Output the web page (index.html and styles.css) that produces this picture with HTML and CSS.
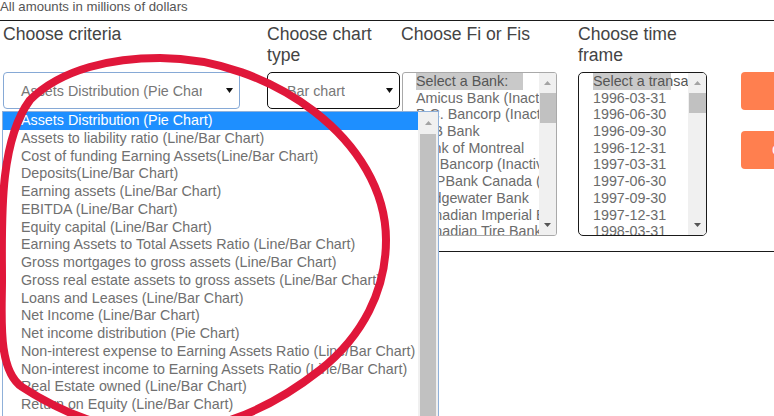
FILE: index.html
```html
<!DOCTYPE html>
<html lang="en">
<head>
<meta charset="utf-8">
<title>Chart criteria</title>
<link rel="stylesheet" href="styles.css">
</head>
<body>
<div class="page">
  <p class="note">All amounts in millions of dollars</p>
  <div class="rule"></div>
  <div class="filters">
    <div class="label">Choose criteria</div>
    <div class="label label-narrow">Choose chart type</div>
    <div class="label">Choose Fi or Fis</div>
    <div class="label label-narrow">Choose time frame</div>
    <div class="label"></div>

    <div class="cell cell-criteria">
      <div class="select select-criteria">
        <span class="select-text">Assets Distribution (Pie Chart)</span>
        <svg class="arrow" width="7" height="5" viewBox="0 0 7 5"><polygon points="0,0 7,0 3.5,5" fill="#111"/></svg>
      </div>
      <div class="dropdown">
        <ul class="dd-list">
          <li class="selected">Assets Distribution (Pie Chart)</li>
          <li>Assets to liability ratio (Line/Bar Chart)</li>
          <li>Cost of funding Earning Assets(Line/Bar Chart)</li>
          <li>Deposits(Line/Bar Chart)</li>
          <li>Earning assets (Line/Bar Chart)</li>
          <li>EBITDA (Line/Bar Chart)</li>
          <li>Equity capital (Line/Bar Chart)</li>
          <li>Earning Assets to Total Assets Ratio (Line/Bar Chart)</li>
          <li>Gross mortgages to gross assets (Line/Bar Chart)</li>
          <li>Gross real estate assets to gross assets (Line/Bar Chart)</li>
          <li>Loans and Leases (Line/Bar Chart)</li>
          <li>Net Income (Line/Bar Chart)</li>
          <li>Net income distribution (Pie Chart)</li>
          <li>Non-interest expense to Earning Assets Ratio (Line/Bar Chart)</li>
          <li>Non-interest income to Earning Assets Ratio (Line/Bar Chart)</li>
          <li>Real Estate owned (Line/Bar Chart)</li>
          <li>Return on Equity (Line/Bar Chart)</li>
        </ul>
        <div class="dd-scroll">
          <div class="sb-btn dd-up"><svg width="7" height="4" viewBox="0 0 7 4"><polygon points="0,4 7,4 3.5,0" fill="#a3a3a3"/></svg></div>
          <div class="dd-thumb"></div>
        </div>
      </div>
    </div>

    <div class="cell">
      <div class="select select-type">
        <span class="select-text">Bar chart</span>
        <svg class="arrow" width="7" height="5" viewBox="0 0 7 5"><polygon points="0,0 7,0 3.5,5" fill="#111"/></svg>
      </div>
    </div>

    <div class="cell">
      <div class="listbox listbox-bank">
        <div class="lb-options">
          <div class="placeholder">Select a Bank:</div>
          <div>Amicus Bank (Inactive)</div>
          <div>B.C. Bancorp (Inactive)</div>
          <div>B2B Bank</div>
          <div>Bank of Montreal</div>
          <div>BC Bancorp (Inactive)</div>
          <div>BNPBank Canada (Inactive)</div>
          <div>Bridgewater Bank</div>
          <div>Canadian Imperial Bank of Commerce</div>
          <div>Canadian Tire Bank</div>
        </div>
        <div class="lb-scroll">
          <div class="sb-btn"><svg width="7" height="4" viewBox="0 0 7 4"><polygon points="0,4 7,4 3.5,0" fill="#a3a3a3"/></svg></div>
          <div class="lb-thumb thumb-bank"></div>
          <div class="lb-track"></div>
          <div class="sb-btn"><svg width="7" height="4" viewBox="0 0 7 4"><polygon points="0,0 7,0 3.5,4" fill="#555"/></svg></div>
        </div>
      </div>
    </div>

    <div class="cell">
      <div class="listbox listbox-time">
        <div class="lb-options">
          <div class="placeholder">Select a transaction date</div>
          <div>1996-03-31</div>
          <div>1996-06-30</div>
          <div>1996-09-30</div>
          <div>1996-12-31</div>
          <div>1997-03-31</div>
          <div>1997-06-30</div>
          <div>1997-09-30</div>
          <div>1997-12-31</div>
          <div>1998-03-31</div>
        </div>
        <div class="lb-scroll">
          <div class="sb-btn"><svg width="7" height="4" viewBox="0 0 7 4"><polygon points="0,4 7,4 3.5,0" fill="#a3a3a3"/></svg></div>
          <div class="lb-thumb thumb-time"></div>
          <div class="lb-track"></div>
          <div class="sb-btn"><svg width="7" height="4" viewBox="0 0 7 4"><polygon points="0,0 7,0 3.5,4" fill="#555"/></svg></div>
        </div>
      </div>
    </div>

    <div class="cell buttons">
      <button class="btn btn-draw">Draw</button>
      <button class="btn btn-clear">C</button>
    </div>
  </div>
  <div class="rule rule-bottom"></div>
</div>
<svg class="annotation" width="774" height="416" viewBox="0 0 774 416">
  <path d="M160,58 C270,58 386,140 386,240 C386,290 363,336 320,370 C273,407 218,432 158,432 C110,432 62,413 22,387 C-3,370 2,315 2,280 C2,225 -2,143 30,100 C62,68 114,58 160,58 Z" fill="none" stroke="#e0173a" stroke-width="8"/>
</svg>
</body>
</html>
```
FILE: styles.css
```css
html, body {
  margin: 0;
  padding: 0;
  background: #fff;
}
body {
  width: 774px;
  height: 416px;
  overflow: hidden;
  position: relative;
  font-family: "Liberation Sans", Arial, sans-serif;
  color: #555;
}
.note {
  margin: -1px 0 0;
  font-size: 13.2px;
  line-height: 15px;
  color: #555;
}
.rule {
  height: 0;
  border-top: 1px solid #1a1a1a;
  margin-top: 6px;
}
.rule-bottom {
  margin-top: 15px;
}
.filters {
  display: grid;
  grid-template-columns: 264px 134px 177px 163px 33px;
  row-gap: 6px;
  padding: 3px 0 0 3px;
}
.label {
  font-size: 17.6px;
  line-height: 21px;
  color: #444;
}
.label-narrow {
  width: 130px;
}
.cell {
  position: relative;
}
.select {
  box-sizing: border-box;
  height: 37px;
  border: 1px solid #111;
  border-radius: 5px;
  display: flex;
  align-items: center;
  background: #fff;
}
.select-criteria {
  width: 237px;
  border-color: #86a9d6;
  border-radius: 4px;
}
.select-type {
  width: 133px;
}
.select-text {
  font-size: 14.3px;
  color: #777;
  white-space: nowrap;
  overflow: hidden;
}
.select-criteria .select-text {
  padding-left: 17px;
  width: 181px;
}
.select-type .select-text {
  padding-left: 19px;
}
.arrow {
  margin-left: auto;
  margin-right: 6px;
}
.dropdown {
  position: absolute;
  top: 39px;
  left: -1px;
  width: 437px;
  height: 330px;
  box-sizing: border-box;
  border: 1px solid #8fb0d9;
  background: #fff;
  display: flex;
  z-index: 5;
}
.dd-list {
  flex: 1;
  list-style: none;
  margin: 0;
  padding: 0;
  overflow: hidden;
}
.dd-list li {
  height: 17.75px;
  line-height: 17.75px;
  padding-left: 18px;
  font-size: 14.3px;
  color: #707070;
  white-space: nowrap;
}
.dd-list li.selected {
  background: #1e8fff;
  color: #fff;
}
.dd-scroll {
  width: 20px;
  background: #f0f0f0;
  display: flex;
  flex-direction: column;
}
.sb-btn {
  height: 20px;
  display: flex;
  align-items: center;
  justify-content: center;
  flex: none;
}
.dd-up {
  height: 21px;
}
.dd-thumb {
  flex: 1;
  margin: 1px 2px 0;
  background: #c1c1c1;
}
.listbox {
  box-sizing: border-box;
  height: 164px;
  border: 1px solid #a9a9a9;
  border-radius: 3px;
  display: flex;
  overflow: hidden;
  background: #fff;
}
.listbox-bank {
  width: 155px;
  margin-left: 1px;
}
.listbox-time {
  width: 129px;
  border-color: #1a1a1a;
  border-radius: 5px;
}
.lb-options {
  flex: 1;
  min-width: 0;
  padding-left: 13px;
  overflow: hidden;
}
.listbox-time .lb-options {
  padding-left: 14px;
}
.lb-options div {
  height: 16.7px;
  line-height: 16.7px;
  font-size: 14.3px;
  color: #6b6b6b;
  white-space: nowrap;
}
.lb-options .placeholder {
  color: #555;
  background: linear-gradient(#c9c9c9, #c9c9c9) no-repeat;
  background-size: 107px 100%;
}
.listbox-time .lb-options .placeholder {
  background-size: 78px 100%;
}
.lb-scroll {
  width: 17px;
  flex: none;
  background: #f0f0f0;
  display: flex;
  flex-direction: column;
}
.listbox-time .lb-scroll {
  width: 18px;
}
.lb-thumb {
  margin: 0 0 0 1px;
  background: #c1c1c1;
  flex: none;
}
.thumb-bank {
  height: 30px;
}
.thumb-time {
  height: 20px;
}
.lb-track {
  flex: 1;
}
.buttons {
  display: flex;
  flex-direction: column;
  gap: 21px;
  overflow: hidden;
}
.btn {
  display: block;
  width: 33px;
  height: 38px;
  border: 0;
  border-radius: 4px 0 0 4px;
  background: #ff7f4f;
  color: #fff;
  font-family: "Liberation Sans", Arial, sans-serif;
  font-size: 14.3px;
  text-align: left;
  white-space: nowrap;
  overflow: hidden;
  margin: 0;
}
.btn-draw {
  padding: 0 0 0 40px;
}
.btn-clear {
  padding: 0 0 0 31px;
}
.annotation {
  position: absolute;
  top: 0;
  left: 0;
  z-index: 10;
  pointer-events: none;
}
```
